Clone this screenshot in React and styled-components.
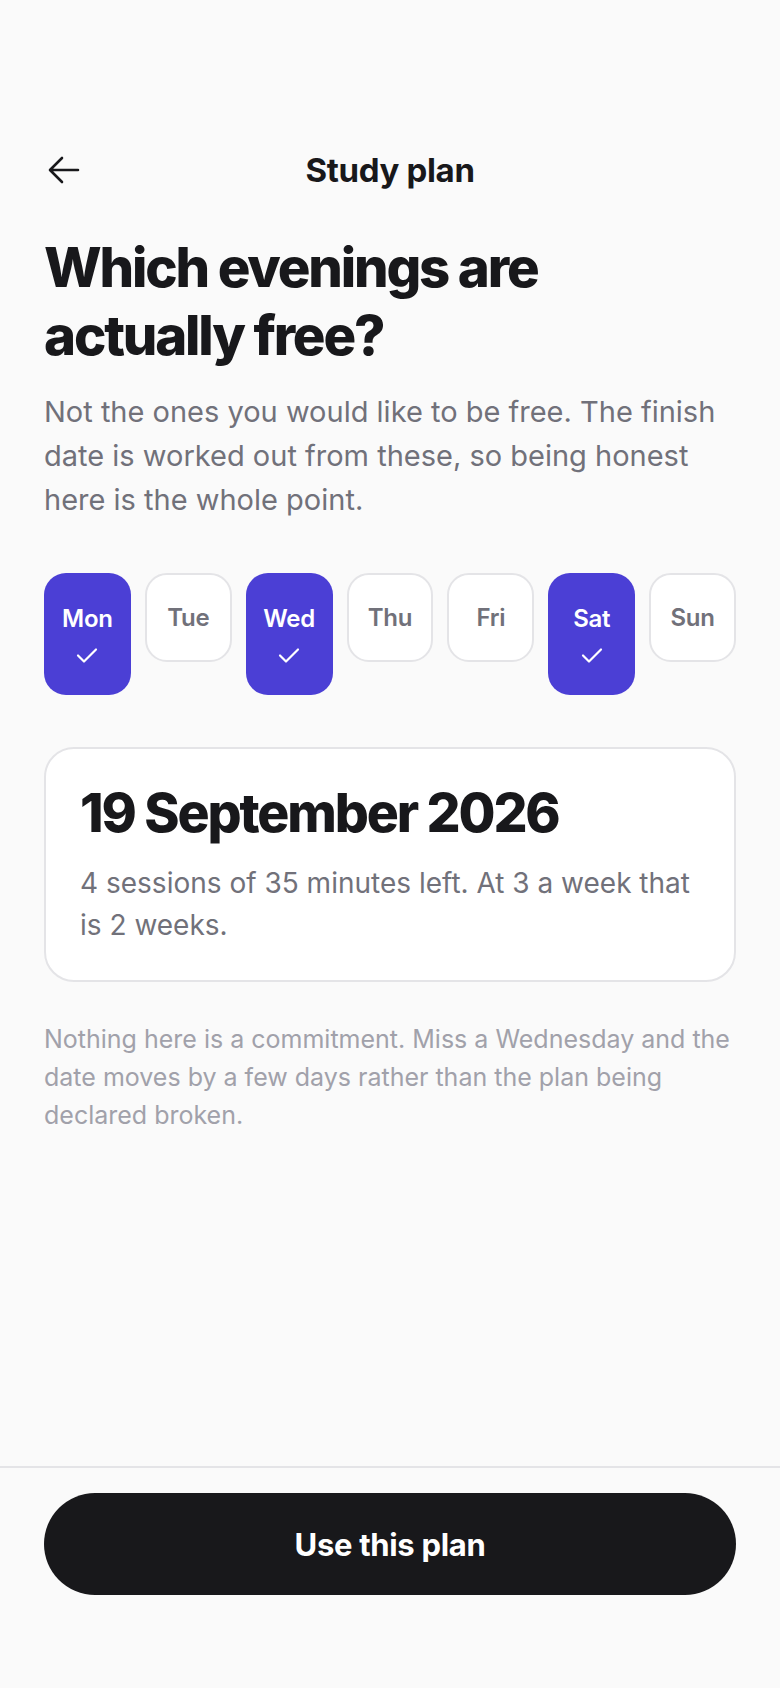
import React, { useState } from "react";
import styled, { createGlobalStyle } from "styled-components";

const GlobalStyle = createGlobalStyle`
  * { box-sizing: border-box; }
  html, body {
    margin: 0;
    padding: 0;
    background: #fafafa;
  }
  body {
    font-family: Inter, "Noto Sans", sans-serif;
    color: #18181b;
    -webkit-font-smoothing: antialiased;
  }
`;

const Page = styled.div`
  min-height: 100vh;
  display: flex;
  flex-direction: column;
  background: #fafafa;
`;

const Main = styled.main`
  flex: 1;
  padding: 140px 44px 0;
`;

const Header = styled.header`
  position: relative;
  height: 60px;
  display: flex;
  align-items: center;
  justify-content: center;
`;

const BackButton = styled.button`
  position: absolute;
  left: 0;
  top: 50%;
  transform: translateY(-50%);
  border: 0;
  padding: 0;
  background: none;
  display: flex;
  color: #18181b;
  cursor: pointer;
`;

const Title = styled.h1`
  margin: 0;
  font-size: 33px;
  font-weight: 700;
  letter-spacing: -0.01em;
`;

const Heading = styled.h2`
  margin: 33px 0 0;
  font-size: 54.5px;
  line-height: 68px;
  font-weight: 800;
  letter-spacing: -0.04em;
  color: #18181b;
`;

const Lead = styled.p`
  margin: 21px 0 0;
  font-size: 29px;
  line-height: 44px;
  color: #71717a;
`;

const Days = styled.div`
  margin-top: 51px;
  display: grid;
  grid-template-columns: repeat(7, 1fr);
  gap: 14px;
  align-items: start;
`;

const Day = styled.button`
  height: ${(p) => (p.$on ? "122px" : "89px")};
  border-radius: 22px;
  border: ${(p) => (p.$on ? "0" : "2px solid #e4e4e7")};
  background: ${(p) => (p.$on ? "#4b3fd5" : "#ffffff")};
  color: ${(p) => (p.$on ? "#ffffff" : "#71717a")};
  font-family: inherit;
  font-size: 24px;
  font-weight: 600;
  letter-spacing: -0.01em;
  display: flex;
  flex-direction: column;
  align-items: center;
  justify-content: ${(p) => (p.$on ? "flex-start" : "center")};
  padding: ${(p) => (p.$on ? "31px 0 0" : "0")};
  gap: 14px;
  cursor: pointer;
`;

const Card = styled.section`
  margin-top: 52px;
  background: #ffffff;
  border: 2px solid #e4e4e7;
  border-radius: 30px;
  padding: 33px 34px 34px;
`;

const DateText = styled.div`
  font-size: 53.5px;
  line-height: 62px;
  font-weight: 800;
  letter-spacing: -0.04em;
  color: #18181b;
`;

const CardBody = styled.p`
  margin: 18px 0 0;
  font-size: 28px;
  line-height: 42px;
  color: #71717a;
`;

const Note = styled.p`
  margin: 38px 0 0;
  font-size: 25px;
  line-height: 38px;
  color: #a1a1aa;
`;

const Footer = styled.footer`
  border-top: 2px solid #e4e4e7;
  padding: 25px 44px 93px;
`;

const PrimaryButton = styled.button`
  width: 100%;
  height: 102px;
  border: 0;
  border-radius: 51px;
  background: #18181b;
  color: #ffffff;
  font-family: inherit;
  font-size: 31px;
  font-weight: 700;
  letter-spacing: -0.01em;
  cursor: pointer;
`;

const ArrowIcon = () => (
  <svg width="36" height="28" viewBox="0 0 36 28" fill="none">
    <path
      d="M34 14H7M18 2L6 14L18 26"
      stroke="currentColor"
      strokeWidth="2.6"
      strokeLinecap="round"
      strokeLinejoin="round"
    />
  </svg>
);

const Check = () => (
  <svg width="22" height="17" viewBox="0 0 22 17" fill="none">
    <path
      d="M2 8.5L8 14.5L20 2.5"
      stroke="currentColor"
      strokeWidth="2.2"
      strokeLinecap="round"
      strokeLinejoin="round"
    />
  </svg>
);

const dayNames = ["Mon", "Tue", "Wed", "Thu", "Fri", "Sat", "Sun"];

export default function App() {
  const [picked, setPicked] = useState(["Mon", "Wed", "Sat"]);

  const toggle = (d) => {
    setPicked((cur) =>
      cur.includes(d) ? cur.filter((x) => x !== d) : [...cur, d]
    );
  };

  return (
    <Page>
      <GlobalStyle />
      <Main>
        <Header>
          <BackButton aria-label="Back">
            <ArrowIcon />
          </BackButton>
          <Title>Study plan</Title>
        </Header>

        <Heading>
          Which evenings are
          <br />
          actually free?
        </Heading>
        <Lead>
          Not the ones you would like to be free. The finish date is worked out
          from these, so being honest here is the whole point.
        </Lead>

        <Days>
          {dayNames.map((d) => {
            const on = picked.includes(d);
            return (
              <Day key={d} $on={on} onClick={() => toggle(d)}>
                {d}
                {on && <Check />}
              </Day>
            );
          })}
        </Days>

        <Card>
          <DateText>19 September 2026</DateText>
          <CardBody>
            4 sessions of 35 minutes left. At 3 a week that is 2 weeks.
          </CardBody>
        </Card>

        <Note>
          Nothing here is a commitment. Miss a Wednesday and the date moves by a
          few days rather than the plan being declared broken.
        </Note>
      </Main>

      <Footer>
        <PrimaryButton>Use this plan</PrimaryButton>
      </Footer>
    </Page>
  );
}
